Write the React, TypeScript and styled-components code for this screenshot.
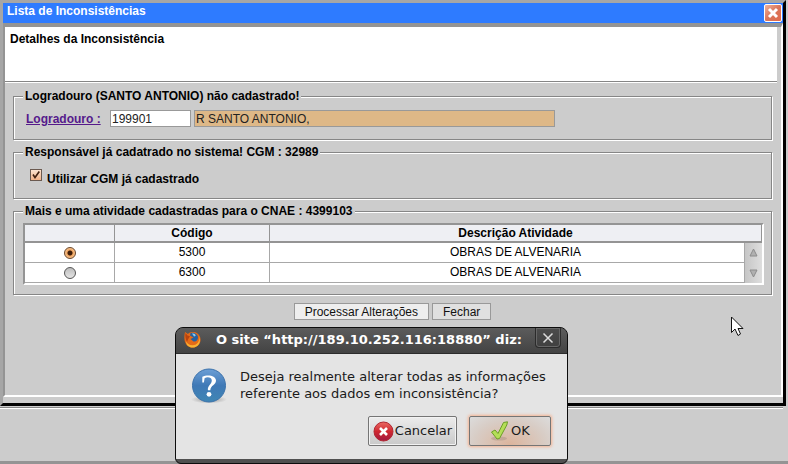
import React, { useState } from 'react';
import styled, { createGlobalStyle } from 'styled-components';

const GlobalStyle = createGlobalStyle`
  *, *::before, *::after { box-sizing: border-box; }
  body {
    margin: 0;
    background: #cccccc;
    color: #000;
    font: 12px/14px "Liberation Sans", Arial, sans-serif;
  }
  button, input { font: inherit; margin: 0; }
`;

const Page = styled.div`
  position: relative;
  display: flex;
  flex-direction: column;
  min-height: 100vh;
  overflow: hidden;
`;

const Window = styled.section`
  margin-right: 2px;
  padding-bottom: 6px;
  border: 3px solid;
  border-color: #a6a6a6 #000 #000 #a6a6a6;
`;

const TitleBar = styled.header`
  display: flex;
  justify-content: space-between;
  align-items: flex-start;
  height: 20px;
  padding: 1px 1px 1px 4px;
  background: #2e7bff;
`;

const WindowTitle = styled.h1`
  margin: 0;
  color: #fff;
  font-size: 12px;
  line-height: 14px;
`;

const CloseWindow = styled.button`
  display: flex;
  padding: 0;
  border: 0;
  background: none;
`;

const Frame = styled.div`
  padding-bottom: 75px;
  border: 2px solid;
  border-top-width: 4px;
  border-color: #949494 #fff #fff #949494;
`;

const Details = styled.div`
  height: 55px;
  margin: 0 4px 1px 0;
  padding: 5px;
  background: #fff;
  border-bottom: 1px solid #868686;
  box-shadow: 0 1px 0 #fff;
`;

const DetailsTitle = styled.h2`
  margin: 0;
  font-size: 12px;
  line-height: 14px;
`;

const Form = styled.form`
  display: flex;
  flex-direction: column;
  gap: 5px;
  padding: 6px 9px 0 8px;
`;

const Group = styled.fieldset<{ $top: number; $bottom: number }>`
  min-width: 0;
  margin: 0;
  padding: ${(p) => p.$top}px 7px ${(p) => p.$bottom}px 9px;
  border: 1px solid #868686;
  box-shadow: 1px 1px 0 #fff, inset 1px 1px 0 #fff;
`;

const GroupTitle = styled.legend`
  padding: 0 2px;
  background: #ccc;
  font-weight: bold;
`;

const Row = styled.div`
  display: flex;
  align-items: center;
  gap: 3px;
  padding-left: 3px;
`;

const FieldLink = styled.a`
  width: 81px;
  color: #551a8b;
  font-weight: bold;
`;

const TextBox = styled.input<{ $wide?: boolean }>`
  flex: 0 1 ${(p) => (p.$wide ? '361px' : '81px')};
  min-width: 0;
  height: 17px;
  padding: 0 1px;
  border: 1px solid #999;
  border-radius: 0;
  background: ${(p) => (p.$wide ? '#deb887' : '#fff')};
  color: #222;
  outline: 0;
`;

const CheckRow = styled.label`
  display: flex;
  align-items: flex-start;
  gap: 5px;
  height: 18px;
  padding-left: 7px;
  font-weight: bold;

  span { padding-top: 3px; }
`;

const CheckBox = styled.input`
  appearance: none;
  width: 12px;
  height: 12px;
  border: 1px solid #6b5a50;
  background: linear-gradient(#fff, #f0f0f0);

  &:checked {
    background:
      url("data:image/svg+xml,%3Csvg xmlns='http://www.w3.org/2000/svg' viewBox='0 0 10 10'%3E%3Cpath d='M2 4.5L4 7.5L8.3 1.5' fill='none' stroke='%23402010' stroke-width='1.6'/%3E%3C/svg%3E"),
      linear-gradient(#fbe3d0, #f3b287);
  }
`;

const TableFrame = styled.div`
  border: 2px solid;
  border-color: #949494 #fff #fff #949494;
`;

const Table = styled.table`
  width: 100%;
  table-layout: fixed;
  border-collapse: separate;
  border-spacing: 0;
  text-align: center;
  background: #fff;
`;

const SelectColumn = styled.col`
  width: 90px;
`;

const CodeColumn = styled.col`
  width: 155px;
`;

const ScrollColumn = styled.col`
  width: 17px;
`;

const HeadCell = styled.th`
  height: 18px;
  padding: 0 0 1px;
  line-height: 14px;
  background: #eeeff3;
  border-right: 1px solid #949494;
  border-bottom: 2px solid #949494;
`;

const Cell = styled.td<{ $balance?: boolean }>`
  height: 20px;
  padding: 0 0 1px ${(p) => (p.$balance ? '17px' : '0')};
  line-height: 14px;
  border-right: 1px solid #a8a8a8;
  border-bottom: 1px solid #a8a8a8;
`;

const ScrollCell = styled.td`
  padding: 0;
  background: linear-gradient(90deg, #c6c6c6, #dedede);
`;

const Scroller = styled.div`
  display: flex;
  flex-direction: column;
  align-items: center;
  gap: 12px;
`;

const Radio = styled.input`
  appearance: none;
  display: block;
  width: 12px;
  height: 12px;
  && { margin: 2px auto 0; }
  border: 1px solid #555;
  border-radius: 50%;
  background: linear-gradient(#bdbdbd, #e4e4e4);

  &:checked {
    border-color: #6a4528;
    background: radial-gradient(circle, #3f1d08 0 2px, #f0a560 3px, #fbd3a8 6px);
  }
`;

const Actions = styled.div`
  display: flex;
  justify-content: center;
  gap: 3px;
  padding-top: 3px;
`;

const PlainButton = styled.button`
  height: 17px;
  padding: 0 10px;
  border: 1px solid #999;
  background: #eee;
  color: #111;
  line-height: 14px;

  & + & { background: #e0e0e0; }
`;

const Backdrop = styled.div`
  flex: 1;
  margin-top: 1px;
  border-bottom: 3px solid #949494;
`;

const BackdropEdge = styled.hr`
  height: 2px;
  margin: 0 5px 0 0;
  border: 0;
  border-top: 1px solid #868686;
  border-bottom: 1px solid #fff;
`;

const Dialog = styled.section`
  position: absolute;
  top: 327px;
  left: 175px;
  width: 393px;
  padding-bottom: 4px;
  overflow: hidden;
  border: 1px solid #0c0c0c;
  border-radius: 8px 8px 6px 6px;
  background: #505050;
  font-family: "DejaVu Sans", sans-serif;
`;

const DialogBar = styled.header`
  display: flex;
  align-items: flex-start;
  height: 26px;
  padding: 0 6px 0 8px;
  border-bottom: 1px solid #2c2c2c;
  background: linear-gradient(#5c5c5c, #434343);
`;

const DialogTitle = styled.h2`
  flex: 1;
  margin: 0 0 0 15px;
  color: #fff;
  font-size: 13px;
  line-height: 24px;
  white-space: nowrap;
`;

const DialogClose = styled.button`
  display: flex;
  align-items: center;
  justify-content: center;
  width: 26px;
  height: 20px;
  padding: 0;
  border: 1px solid #2b2b2b;
  border-top: 0;
  border-radius: 0 0 4px 4px;
  background: linear-gradient(#4c4c4c, #404040);
  box-shadow: inset 0 0 0 1px #666;
`;

const DialogBody = styled.div`
  padding: 14px 16px 13px 14px;
  background: #e4e4e4;
`;

const Message = styled.div`
  display: flex;
  gap: 8px;

  p {
    margin: 0;
    color: #1a1a1a;
    font-size: 13px;
    line-height: 17px;
    white-space: nowrap;
  }
`;

const DialogActions = styled.div`
  display: flex;
  justify-content: flex-end;
  gap: 12px;
  margin-top: 8px;
`;

const DialogButton = styled.button<{ $primary?: boolean }>`
  display: flex;
  align-items: center;
  justify-content: center;
  gap: 1px;
  width: ${(p) => (p.$primary ? '82px' : '89px')};
  height: 30px;
  padding: 0;
  border: 1px solid #757575;
  border-radius: 2px;
  background: ${(p) =>
    p.$primary
      ? 'radial-gradient(ellipse at 50% 100%, #dcb49c, #d8cdc6 65%, #dcdcdc)'
      : 'linear-gradient(#ececec, #c9c9c9)'};
  box-shadow: ${(p) => (p.$primary ? '0 0 3px 1px #f5b290' : 'inset 0 0 0 1px #f2f2f2')};
  color: #1a1a1a;
  font-size: 13px;
`;

const Pointer = styled.svg`
  position: absolute;
  top: 316px;
  left: 730px;
`;

const CloseIcon = () => (
  <svg width="18" height="18" viewBox="0 0 18 18" aria-hidden="true">
    <defs>
      <linearGradient id="closeFill" x1="0" y1="0" x2="1" y2="1">
        <stop offset="0" stopColor="#f0b5a0" />
        <stop offset=".5" stopColor="#d9765a" />
        <stop offset="1" stopColor="#e2694a" />
      </linearGradient>
    </defs>
    <rect x=".5" y=".5" width="17" height="17" rx="1.5" fill="url(#closeFill)" stroke="#fff" />
    <path d="M5 5L13 13M13 5L5 13" stroke="#fff" strokeWidth="3" />
  </svg>
);

const FoxIcon = () => (
  <svg width="17" height="21" viewBox="0 0 17 21" aria-hidden="true">
    <path d="M1 4L4 6C6 3.500 11 3.500 13.500 5.500C17 8 17.500 13 15 16.500C12 20.500 5.500 20.800 2.300 16.500C-.3 13 .2 8 1 4Z" fill="#e46a18" />
    <path d="M6.500 5.200C9 3.800 13.500 5.500 14 9C14.300 12 12 14 9.500 13.500L6.500 11L9.500 9.500L6 7.500Z" fill="#27609f" />
    <path d="M8 5.500C10.500 5 12 6.500 11.500 8L10 8.500Z" fill="#8ccbee" />
    <path d="M14.500 7.500C16.800 12 13.500 17.500 8.500 17.300C5 17.200 3 15.500 2 13C2 17.500 5.500 20 9.500 19.500C15.500 18.800 17.500 12.500 14.500 7.500Z" fill="#f7b233" />
    <path d="M1.500 5L3.500 7.500L6 8.200L4.200 11L3 14C1.500 11 1 8 1.500 5Z" fill="#b8430f" />
  </svg>
);

const QuestionIcon = () => (
  <svg width="42" height="40" viewBox="0 0 42 40" aria-hidden="true">
    <defs>
      <linearGradient id="questionFill" x1="0" y1="0" x2="0" y2="1">
        <stop offset="0" stopColor="#6c9fd6" />
        <stop offset=".5" stopColor="#4079b6" />
        <stop offset="1" stopColor="#3f86b4" />
      </linearGradient>
      <radialGradient id="questionShade">
        <stop offset=".5" stopColor="#bcbcbc" />
        <stop offset="1" stopColor="#e4e4e4" />
      </radialGradient>
    </defs>
    <ellipse cx="19" cy="31.500" rx="18" ry="4" fill="url(#questionShade)" />
    <circle cx="19" cy="17.500" r="16.500" fill="url(#questionFill)" stroke="#3c72ab" />
    <path d="M12.300 14.500V8.800C17 6.200 26 7.200 26 12.600C26 17 20.600 17.300 20.300 22.300H17.900C17.400 17.500 21.800 16.500 21.800 12.600C21.800 9 17 8.600 14.600 10.200L13.900 14.500Z" fill="#fff" />
    <circle cx="19" cy="26.300" r="2.400" fill="#fff" />
  </svg>
);

const CancelIcon = () => (
  <svg width="21" height="21" viewBox="0 0 21 21" aria-hidden="true">
    <defs>
      <linearGradient id="cancelFill" x1="0" y1="0" x2="0" y2="1">
        <stop offset="0" stopColor="#ea6a63" />
        <stop offset=".5" stopColor="#cf2730" />
        <stop offset="1" stopColor="#a11840" />
      </linearGradient>
    </defs>
    <circle cx="10.500" cy="10.500" r="9.500" fill="url(#cancelFill)" stroke="#b02630" />
    <path d="M7 7L14 14M14 7L7 14" stroke="#fff" strokeWidth="2.600" />
  </svg>
);

const OkIcon = () => (
  <svg width="20" height="20" viewBox="0 0 20 20" aria-hidden="true">
    <ellipse cx="9" cy="17.500" rx="8" ry="2" fill="#b9a090" opacity=".7" />
    <path d="M1.500 11L5 9L8 12.500L13.500 1.500L17.500 .800L16.800 4L9.500 17.500L7 18Z" fill="#b4de57" stroke="#6c9e28" strokeLinejoin="round" />
  </svg>
);

const activities = [
  { code: '5300', name: 'OBRAS DE ALVENARIA' },
  { code: '6300', name: 'OBRAS DE ALVENARIA' },
];

export default function App() {
  const [selected, setSelected] = useState('5300');

  return (
    <Page>
      <GlobalStyle />
      <Window>
        <TitleBar>
          <WindowTitle>Lista de Inconsistências</WindowTitle>
          <CloseWindow type="button" aria-label="Fechar janela"><CloseIcon /></CloseWindow>
        </TitleBar>
        <Frame>
          <Details>
            <DetailsTitle>Detalhes da Inconsistência</DetailsTitle>
          </Details>
          <Form onSubmit={(e) => e.preventDefault()}>
            <Group $top={7} $bottom={12}>
              <GroupTitle>Logradouro (SANTO ANTONIO) não cadastrado!</GroupTitle>
              <Row>
                <FieldLink href="#logradouro" id="street-label">Logradouro :</FieldLink>
                <TextBox id="logradouro" aria-labelledby="street-label" defaultValue="199901" />
                <TextBox $wide readOnly aria-label="Nome do logradouro" value="R SANTO ANTONIO," />
              </Row>
            </Group>
            <Group $top={10} $bottom={11}>
              <GroupTitle>Responsável já cadatrado no sistema! CGM : 32989</GroupTitle>
              <CheckRow>
                <CheckBox type="checkbox" defaultChecked />
                <span>Utilizar CGM já cadastrado</span>
              </CheckRow>
            </Group>
            <Group $top={5} $bottom={9}>
              <GroupTitle>Mais e uma atividade cadastradas para o CNAE : 4399103</GroupTitle>
              <TableFrame>
                <Table>
                  <colgroup>
                    <SelectColumn />
                    <CodeColumn />
                    <col />
                    <ScrollColumn />
                  </colgroup>
                  <thead>
                    <tr>
                      <HeadCell aria-label="Seleção" />
                      <HeadCell>Código</HeadCell>
                      <HeadCell colSpan={2}>Descrição Atividade</HeadCell>
                    </tr>
                  </thead>
                  <tbody>
                    {activities.map((a, i) => (
                      <tr key={a.code}>
                        <Cell>
                          <Radio
                            type="radio"
                            name="atividade"
                            aria-label={a.code}
                            checked={selected === a.code}
                            onChange={() => setSelected(a.code)}
                          />
                        </Cell>
                        <Cell>{a.code}</Cell>
                        <Cell $balance>{a.name}</Cell>
                        {i === 0 && (
                          <ScrollCell rowSpan={2}>
                            <Scroller>
                              <svg width="9" height="9" viewBox="0 0 9 9" aria-hidden="true">
                                <path d="M4.500 1L8 8H1Z" fill="#b0b0b0" stroke="#8c8c8c" />
                              </svg>
                              <svg width="9" height="9" viewBox="0 0 9 9" aria-hidden="true">
                                <path d="M4.500 8L8 1H1Z" fill="#b0b0b0" stroke="#8c8c8c" />
                              </svg>
                            </Scroller>
                          </ScrollCell>
                        )}
                      </tr>
                    ))}
                  </tbody>
                </Table>
              </TableFrame>
            </Group>
            <Actions>
              <PlainButton type="button">Processar Alterações</PlainButton>
              <PlainButton type="button">Fechar</PlainButton>
            </Actions>
          </Form>
        </Frame>
      </Window>
      <Backdrop><BackdropEdge /></Backdrop>

      <Pointer width="15" height="21" viewBox="0 0 15 21" aria-hidden="true">
        <path d="M1.500 1V16.500L5 13L8 19.500L10.500 18L8 12.500H13Z" fill="#fff" stroke="#111" />
      </Pointer>

      <Dialog role="dialog" aria-labelledby="dialog-title">
        <DialogBar>
          <FoxIcon />
          <DialogTitle id="dialog-title">O site “http://189.10.252.116:18880” diz:</DialogTitle>
          <DialogClose type="button" aria-label="Fechar diálogo">
            <svg width="12" height="12" viewBox="0 0 12 12" aria-hidden="true">
              <path d="M1.500 1.500L10.500 10.500M10.500 1.500L1.500 10.500" stroke="#ddd" strokeWidth="1.500" />
            </svg>
          </DialogClose>
        </DialogBar>
        <DialogBody>
          <Message>
            <QuestionIcon />
            <p>Deseja realmente alterar todas as informações<br />referente aos dados em inconsistência?</p>
          </Message>
          <DialogActions>
            <DialogButton type="button"><CancelIcon />Cancelar</DialogButton>
            <DialogButton type="button" $primary><OkIcon />OK</DialogButton>
          </DialogActions>
        </DialogBody>
      </Dialog>
    </Page>
  );
}
